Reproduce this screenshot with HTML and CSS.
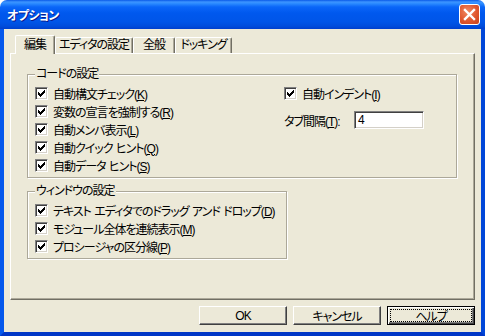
FILE: index.html
```html
<!DOCTYPE html>
<html lang="ja">
<head>
    <meta charset="UTF-8">
    <title>オプション</title>
    <link rel="stylesheet" href="styles.css">
</head>
<body>
    <div class="window">
        <!-- Title bar -->
        <div class="titlebar">
            <span class="title">オプション</span>
            <span class="close">
                <svg width="13" height="13" viewBox="0 0 13 13">
                    <path d="M2 2L11 11M11 2L2 11" stroke="#fff" stroke-width="2.4" stroke-linecap="square"/>
                </svg>
            </span>
        </div>

        <div class="client">
            <!-- Tabs -->
            <div class="tabs">
                <div class="tab active" style="width:40px">編集</div>
                <div class="tab" style="width:78px">エディタの設定</div>
                <div class="tab" style="width:42px">全般</div>
                <div class="tab" style="width:57px">ドッキング</div>
            </div>

            <div class="panel">
                <!-- Code settings -->
                <fieldset class="group code">
                    <legend>コードの設定</legend>
                    <div class="cols">
                        <div class="col left">
                            <label class="check"><span class="box"></span><span>自動構文チェック(<u>K</u>)</span></label>
                            <label class="check"><span class="box"></span><span>変数の宣言を強制する(<u>R</u>)</span></label>
                            <label class="check"><span class="box"></span><span>自動メンバ表示(<u>L</u>)</span></label>
                            <label class="check"><span class="box"></span><span>自動クイック ヒント(<u>Q</u>)</span></label>
                            <label class="check"><span class="box"></span><span>自動データ ヒント(<u>S</u>)</span></label>
                        </div>
                        <div class="col right">
                            <label class="check"><span class="box"></span><span>自動インデント(<u>I</u>)</span></label>
                            <div class="field">
                                <span class="field-label">タブ間隔(<u>T</u>):</span>
                                <span class="textbox">4</span>
                            </div>
                        </div>
                    </div>
                </fieldset>

                <!-- Window settings -->
                <fieldset class="group win">
                    <legend>ウィンドウの設定</legend>
                    <label class="check"><span class="box"></span><span>テキスト エディタでのドラッグ アンド ドロップ(<u>D</u>)</span></label>
                    <label class="check"><span class="box"></span><span>モジュール全体を連続表示(<u>M</u>)</span></label>
                    <label class="check"><span class="box"></span><span>プロシージャの区分線(<u>P</u>)</span></label>
                </fieldset>
            </div>

            <!-- Dialog buttons -->
            <div class="buttons">
                <span class="btn">OK</span>
                <span class="btn">キャンセル</span>
                <span class="btn default"><span class="focus">ヘルプ</span></span>
            </div>
        </div>
    </div>
</body>
</html>
```

FILE: styles.css
```css
/* Reset */
* {
    margin: 0;
    padding: 0;
    box-sizing: border-box;
}

body {
    background: #ffffff;
    font-family: "Liberation Sans", "Noto Sans CJK JP", sans-serif;
    font-size: 12px;
    font-feature-settings: "palt";
    letter-spacing: -1px;
    word-spacing: 1px;
    color: #000;
}

/* Window frame */
.window {
    width: 485px;
    height: 336px;
    display: flex;
    flex-direction: column;
    border-radius: 7px 7px 0 0;
    overflow: hidden;
}

.titlebar {
    height: 29px;
    flex: none;
    display: flex;
    align-items: center;
    justify-content: space-between;
    padding: 0 5px 0 7px;
    background: linear-gradient(to bottom,
        #0a5ae8 0%, #3d95ff 7%, #2c8bff 12%, #0a66f8 24%,
        #0058ee 45%, #0055e8 75%, #004ddc 90%, #003fcd 100%);
}

.title {
    color: #fff;
    font-weight: bold;
    font-size: 12px;
    letter-spacing: -0.5px;
    text-shadow: 1px 1px 0 #0a1a8c;
}

.close {
    width: 21px;
    height: 21px;
    display: flex;
    align-items: center;
    justify-content: center;
    border: 1px solid #fff;
    border-radius: 3px;
    background: radial-gradient(circle at 40% 35%, #f08a63 0%, #e0572f 55%, #c8401a 100%);
}

.client {
    flex: 1;
    display: flex;
    flex-direction: column;
    background: #ece9d8;
    border-left: 4px solid #0558ec;
    border-right: 4px solid #0046d8;
    border-bottom: 4px solid #0036c6;
    padding: 6px 6px 0 6px;
}

/* Tabs */
.tabs {
    display: flex;
    align-items: flex-end;
    height: 18px;
    padding-left: 5px;
    position: relative;
    z-index: 1;
}

.tab {
    height: 16px;
    line-height: 15px;
    text-align: center;
    white-space: nowrap;
    border: 1px solid;
    border-color: #fff #716f64 transparent #fff;
    border-bottom: none;
    border-radius: 2px 2px 0 0;
    box-shadow: inset -1px 0 0 #aca899;
}

.tab.active {
    height: 19px;
    line-height: 18px;
    margin-bottom: -1px;
    background: #ece9d8;
}

.panel {
    height: 247px;
    border: 1px solid;
    border-color: #fff #716f64 #716f64 #fff;
    box-shadow: inset -1px -1px 0 #aca899;
    padding: 13px 16px 0 16px;
}

/* Group boxes */
.group {
    border: 1px solid #aca899;
    box-shadow: inset 1px 1px 0 #fff, 1px 1px 0 #fff;
    padding: 3px 7px 3px 7px;
}

.group legend {
    line-height: 14px;
    padding: 0 1px;
    background: #ece9d8;
}

.group.code {
    width: 430px;
}

.group.win {
    width: 260px;
    margin-top: 6px;
}

.cols {
    display: flex;
}

.col.left {
    width: 249px;
}

/* Checkboxes */
.check {
    display: flex;
    align-items: center;
    gap: 5px;
    height: 18px;
    white-space: nowrap;
}

.box {
    width: 13px;
    height: 13px;
    flex: none;
    background: #fff url("data:image/svg+xml,%3Csvg xmlns='http://www.w3.org/2000/svg' width='7' height='7' shape-rendering='crispEdges'%3E%3Cpath d='M6 0h1v1h-1zM5 1h2v1h-2zM0 2h1v1h-1zM4 2h3v1h-3zM0 3h2v1h-2zM3 3h3v1h-3zM0 4h5v1h-5zM1 5h3v1h-3zM2 6h1v1h-1z'/%3E%3C/svg%3E") no-repeat 2px 2px;
    border: 1px solid;
    border-color: #808080 #fff #fff #808080;
    box-shadow: inset 1px 1px 0 #404040, inset -1px -1px 0 #d4d0c8;
}

.field {
    display: flex;
    align-items: center;
    height: 20px;
    margin-top: 8px;
}

.field-label {
    width: 70px;
}

.textbox {
    width: 70px;
    height: 18px;
    line-height: 16px;
    padding-left: 3px;
    background: #fff;
    border: 1px solid;
    border-color: #808080 #fff #fff #808080;
    box-shadow: inset 1px 1px 0 #404040, inset -1px -1px 0 #d4d0c8;
}

/* Buttons */
.buttons {
    display: flex;
    justify-content: flex-end;
    gap: 6px;
    padding-top: 6px;
}

.btn {
    width: 88px;
    height: 19px;
    display: flex;
    align-items: center;
    justify-content: center;
    border: 1px solid;
    border-color: #fff #404040 #404040 #fff;
    box-shadow: inset -1px -1px 0 #808080;
}

.btn.default {
    border: 1px solid #000;
    box-shadow: inset 1px 1px 0 #fff, inset -1px -1px 0 #404040, inset -2px -2px 0 #808080;
    padding: 3px;
}

.focus {
    width: 100%;
    height: 100%;
    display: flex;
    align-items: center;
    justify-content: center;
    outline: 1px dotted #000;
}
```
